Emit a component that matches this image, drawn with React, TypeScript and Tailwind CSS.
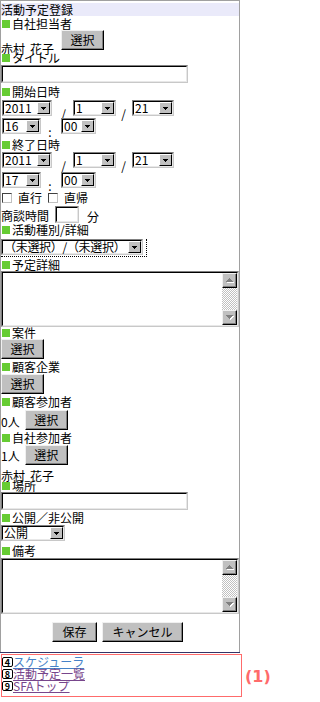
import React from "react";

type P = { className?: string; children?: React.ReactNode };

function Sq() {
  return <span className="ml-[1px] mr-[2px] mt-[2px] inline-block h-[8px] w-[8px] shrink-0 bg-[#66cc33]" />;
}

function Label({ children }: P) {
  return (
    <div className="flex h-[12px] shrink-0 items-start">
      <Sq />
      <span className="whitespace-nowrap leading-[12px]">{children}</span>
    </div>
  );
}

function Inset({ className = "", children }: P) {
  return (
    <div className={`shrink-0 border border-t-[#808080] border-l-[#808080] border-b-[#c8c8c8] border-r-[#c8c8c8] ${className}`}>
      <div className="flex h-full w-full border border-t-black border-l-black border-b-[#e8e8e8] border-r-[#e8e8e8] bg-white">
        {children}
      </div>
    </div>
  );
}

function Arrow() {
  return (
    <svg width="5" height="3" viewBox="0 0 5 3" shapeRendering="crispEdges">
      <rect x="0" y="0" width="5" height="1" fill="#000" />
      <rect x="1" y="1" width="3" height="1" fill="#000" />
      <rect x="2" y="2" width="1" height="1" fill="#000" />
    </svg>
  );
}

function Sel({ className = "", v, tight }: { className?: string; v: string; tight?: boolean }) {
  return (
    <Inset className={`h-[16px] ${className}`}>
      <span className={`min-w-0 flex-1 whitespace-nowrap pl-[1px] text-[12px] leading-[12px] ${tight ? "tracking-[-0.3px]" : ""}`}>{v}</span>
      <span className="flex h-[12px] w-[13px] shrink-0 items-center justify-center border-l border-t border-l-white border-t-white border-b border-r border-b-black border-r-black bg-[#c0c0c0]">
        <Arrow />
      </span>
    </Inset>
  );
}

function Btn({ className = "", children }: P) {
  return (
    <div
      className={`flex h-[20px] shrink-0 items-center justify-center whitespace-nowrap border-l border-t border-l-[#f0f0f0] border-t-[#f0f0f0] border-b border-r border-b-black border-r-black bg-[#c0c0c0] text-[12px] leading-[12px] shadow-[inset_-1px_-1px_0_#808080] ${className}`}
    >
      {children}
    </div>
  );
}

function Check({ className = "" }: P) {
  return (
    <span
      className={`inline-block h-[10px] w-[10px] shrink-0 border-l border-t border-l-[#404040] border-t-[#404040] border-b border-r border-b-[#c0c0c0] border-r-[#c0c0c0] bg-white ${className}`}
    />
  );
}

function SBtn({ up }: { up?: boolean }) {
  const rows = up
    ? [
        [3, 1],
        [2, 3],
        [1, 5],
        [0, 7],
      ]
    : [
        [0, 7],
        [1, 5],
        [2, 3],
        [3, 1],
      ];
  return (
    <div className="flex h-[15px] w-[15px] shrink-0 items-center justify-center border-l border-t border-l-[#f0f0f0] border-t-[#f0f0f0] border-b border-r border-b-black border-r-black bg-[#c0c0c0] shadow-[inset_-1px_-1px_0_#808080]">
      <svg width="8" height="5" viewBox="0 0 8 5" shapeRendering="crispEdges">
        {rows.map(([x, w], i) => (
          <rect key={"s" + i} x={x + 1} y={i + 1} width={w} height="1" fill="#ffffff" />
        ))}
        {rows.map(([x, w], i) => (
          <rect key={"g" + i} x={x} y={i} width={w} height="1" fill="#808080" />
        ))}
      </svg>
    </div>
  );
}

function TextArea({ className = "" }: P) {
  return (
    <Inset className={`h-[56px] w-[238px] ${className}`}>
      <div className="flex-1" />
      <div className="flex w-[15px] flex-col">
        <SBtn up />
        <div className="flex-1 bg-[image:repeating-conic-gradient(#c0c0c0_0%_25%,#ffffff_0%_50%)] [background-size:2px_2px]" />
        <SBtn />
      </div>
    </Inset>
  );
}

function Name() {
  return (
    <span className="whitespace-nowrap leading-[12px]">
      赤村<span className="inline-block w-[5px]" />花子
    </span>
  );
}

function LinkRow({ n, text, color }: { n: string; text: string; color: string }) {
  return (
    <div className="flex h-[12px] items-center">
      <span className="flex h-[10px] w-[11px] shrink-0 items-center justify-center rounded-[2px] border border-black bg-white text-[9px] font-bold leading-none">
        {n}
      </span>
      <a className={`whitespace-nowrap leading-[12px] underline underline-offset-[1px] ${color}`}>{text}</a>
    </div>
  );
}

export default function App() {
  return (
    <div className="w-[280px] bg-white font-['Noto_Sans_CJK_JP',sans-serif] text-[12px] text-black">
      <div className="flex h-[652px] w-[240px] flex-col border-l border-r border-t border-[#a0a0a0] pt-[2px]">
        <div className="h-[13px] shrink-0 bg-[#eaeafa] leading-[13px]">活動予定登録</div>
        <div className="h-[2px] shrink-0" />
        <Label>自社担当者</Label>
        <div className="flex h-[22px] shrink-0 items-start">
          <div className="mt-[10px]">
            <Name />
          </div>
          <Btn className="ml-[7px] w-[43px]">選択</Btn>
        </div>
        <Label>タイトル</Label>
        <div className="h-[22px] shrink-0 pt-[1px]">
          <Inset className="h-[18px] w-[187px]" />
        </div>
        <Label>開始日時</Label>
        <div className="flex h-[20px] shrink-0 items-start">
          <Sel className="ml-[1px] mt-[2px] w-[50px]" v="2011" />
          <span className="ml-[9px] mt-[10px] w-[5px] text-center leading-[12px]">/</span>
          <Sel className="ml-[7px] mt-[2px] w-[43px]" v="1" />
          <span className="ml-[5px] mt-[10px] w-[5px] text-center leading-[12px]">/</span>
          <Sel className="ml-[6px] mt-[2px] w-[42px]" v="21" />
        </div>
        <div className="flex h-[21px] shrink-0 items-start">
          <Sel className="ml-[1px] w-[39px]" v="16" />
          <span className="ml-[7px] mt-[8px] w-[4px] text-center leading-[12px]">:</span>
          <Sel className="ml-[9px] w-[35px]" v="00" />
        </div>
        <Label>終了日時</Label>
        <div className="flex h-[20px] shrink-0 items-start">
          <Sel className="ml-[1px] mt-[1px] w-[50px]" v="2011" />
          <span className="ml-[9px] mt-[9px] w-[5px] text-center leading-[12px]">/</span>
          <Sel className="ml-[7px] mt-[1px] w-[43px]" v="1" />
          <span className="ml-[5px] mt-[9px] w-[5px] text-center leading-[12px]">/</span>
          <Sel className="ml-[6px] mt-[1px] w-[42px]" v="21" />
        </div>
        <div className="flex h-[20px] shrink-0 items-start">
          <Sel className="ml-[1px] mt-[1px] w-[39px]" v="17" />
          <span className="ml-[7px] mt-[9px] w-[4px] text-center leading-[12px]">:</span>
          <Sel className="ml-[9px] mt-[1px] w-[35px]" v="00" />
        </div>
        <div className="flex h-[14px] shrink-0 items-start">
          <Check className="ml-[1px] mt-[2px]" />
          <span className="ml-[6px] mt-[1px] leading-[12px]">直行</span>
          <Check className="ml-[6px] mt-[2px]" />
          <span className="ml-[6px] mt-[1px] leading-[12px]">直帰</span>
        </div>
        <div className="flex h-[19px] shrink-0 items-start">
          <span className="mt-[5px] whitespace-nowrap leading-[12px]">商談時間</span>
          <Inset className="ml-[6px] mt-[1px] h-[17px] w-[24px]" />
          <span className="ml-[8px] mt-[6px] leading-[12px]">分</span>
        </div>
        <Label>活動種別/詳細</Label>
        <div className="h-[23px] shrink-0 pt-[3px]">
          <div className="w-[146px] border-b border-r border-dotted border-black pb-[1px] pr-[2px]">
            <Sel className="w-[142px]" v="（未選択）/（未選択）" tight />
          </div>
        </div>
        <Label>予定詳細</Label>
        <TextArea />
        <Label>案件</Label>
        <div className="h-[22px] shrink-0">
          <Btn className="w-[43px]">選択</Btn>
        </div>
        <Label>顧客企業</Label>
        <div className="h-[23px] shrink-0 pt-[1px]">
          <Btn className="w-[43px]">選択</Btn>
        </div>
        <Label>顧客参加者</Label>
        <div className="flex h-[24px] shrink-0 items-start">
          <span className="mt-[8px] whitespace-nowrap leading-[12px]">0人</span>
          <Btn className="ml-[5px] mt-[2px] w-[43px]">選択</Btn>
        </div>
        <Label>自社参加者</Label>
        <div className="flex h-[22px] shrink-0 items-start">
          <span className="mt-[6px] whitespace-nowrap leading-[12px]">1人</span>
          <Btn className="ml-[5px] mt-[1px] w-[43px]">選択</Btn>
        </div>
        <div className="h-[14px] shrink-0 pt-[1px]">
          <Name />
        </div>
        <Label>場所</Label>
        <div className="h-[20px] shrink-0">
          <Inset className="h-[18px] w-[187px]" />
        </div>
        <Label>公開／非公開</Label>
        <div className="h-[21px] shrink-0 pt-[1px]">
          <Sel className="w-[64px]" v="公開" />
        </div>
        <Label>備考</Label>
        <div className="h-[57px] shrink-0 pt-[1px]">
          <TextArea />
        </div>
        <div className="flex shrink-0 items-start pl-[51px] pt-[8px]">
          <Btn className="w-[45px]">保存</Btn>
          <Btn className="ml-[5px] w-[81px]">キャンセル</Btn>
        </div>
      </div>
      <div className="h-[1px] w-[240px] bg-[#333366]" />
      <div className="mt-[1px] flex items-center">
        <div className="ml-[1px] h-[43px] w-[241px] border border-[#ff6b6b] pt-[1px]">
          <LinkRow n="4" text="スケジューラ" color="text-[#4682c8]" />
          <LinkRow n="8" text="活動予定一覧" color="text-[#78468c]" />
          <LinkRow n="9" text="SFAトップ" color="text-[#78468c]" />
        </div>
        <span className="ml-[3px] mt-[3px] font-['DejaVu_Sans',sans-serif] text-[16px] font-bold leading-[18px] text-[#ff6b6b]">
          (1)
        </span>
      </div>
    </div>
  );
}
